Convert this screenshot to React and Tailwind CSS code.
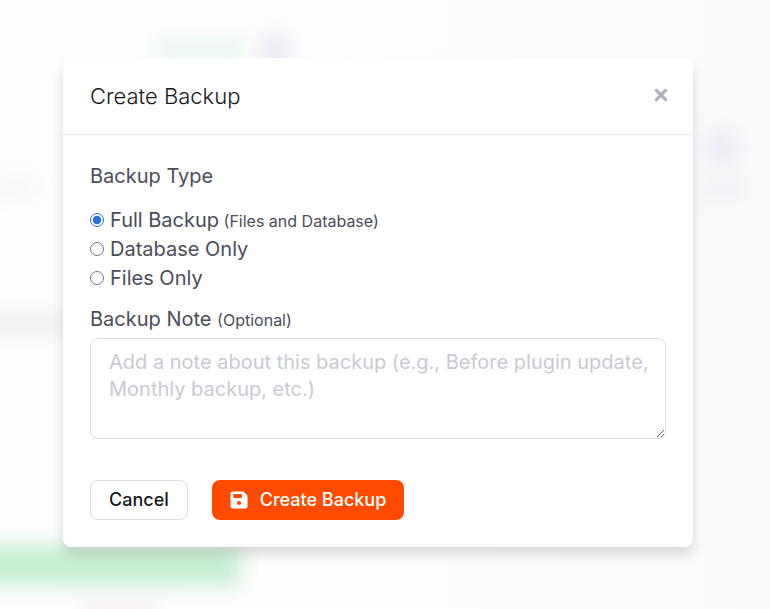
import React, { useState } from 'react';

const backupTypes = [
  { value: 'full', label: 'Full Backup', hint: '(Files and Database)' },
  { value: 'database', label: 'Database Only' },
  { value: 'files', label: 'Files Only' }
];

function SaveIcon() {
  return (
    <svg className="w-[18px] h-[18px]" viewBox="0 0 18 18" fill="currentColor" aria-hidden="true">
      <path
        fillRule="evenodd"
        d="M2.5 0.5H13.3L17.5 4.4V15.5A2 2 0 0 1 15.5 17.5H2.5A2 2 0 0 1 0.5 15.5V2.5A2 2 0 0 1 2.5 0.5ZM3.4 3.1V6.9H11.8V3.1ZM9 9.9A2.1 2.1 0 1 0 9 14.1A2.1 2.1 0 1 0 9 9.9Z"
      />
    </svg>
  );
}

function CloseIcon() {
  return (
    <svg className="w-4 h-4" viewBox="0 0 16 16" fill="none" stroke="currentColor" strokeWidth="3.2" strokeLinecap="round" aria-hidden="true">
      <path d="M3.4 3.4L12.6 12.6M12.6 3.4L3.4 12.6" />
    </svg>
  );
}

// Blurred page behind the dialog
function Backdrop() {
  return (
    <div className="absolute inset-0 overflow-hidden bg-linear-to-r from-[#fdfdfd] from-50% to-[#f9fafc]">
      <div className="flex flex-col -ml-10 blur-[10px]">
        <div className="flex items-center gap-4 pt-9 pl-[195px]">
          <div className="w-[92px] h-5 bg-[#ebf9f0]" />
          <div className="w-6 h-7 rounded-full bg-[#e4e0f0]" />
        </div>
        <div className="flex items-end justify-between pt-[70px] pr-7">
          <div className="w-[76px] h-4 bg-[#f5f5f9]" />
          <div className="flex flex-col items-center gap-5">
            <div className="w-7 h-7 rounded-full bg-[#e9e4f1]" />
            <div className="w-10 h-3 bg-[#efecf4]" />
          </div>
        </div>
        <div className="w-36 h-5 mt-[120px] bg-[#efeff0]" />
        <div className="w-[280px] h-10 mt-[211px] bg-[#c6eed3]" />
        <div className="w-[70px] h-3 mt-5 ml-[125px] bg-[#fbeaea]" />
      </div>
    </div>
  );
}

export default function App() {
  const [type, setType] = useState('full');
  const [note, setNote] = useState('');

  return (
    <div className="relative min-h-screen pt-[58px] pb-10 pl-[63px] pr-[77px] font-['Inter',sans-serif] text-xl text-[#4b4d59]">
      <Backdrop />
      <div
        role="dialog"
        aria-labelledby="dialog-title"
        className="relative w-full max-w-3xl rounded-lg bg-white shadow-[0_8px_12px_rgba(0,0,0,0.13)]"
      >
        <div className="flex items-center justify-between h-[77px] pl-[27px] pr-6 border-b border-[#ebebed]">
          <h2 id="dialog-title" className="text-[22px] font-light text-[#18181b]">Create Backup</h2>
          <button type="button" aria-label="Close" className="pb-0.5 text-[#b0afbc]">
            <CloseIcon />
          </button>
        </div>

        <form className="p-[27px]" onSubmit={(e) => e.preventDefault()}>
          <fieldset>
            <legend className="leading-7">Backup Type</legend>
            <div className="pt-4">
              {backupTypes.map((item) => (
                <label key={item.value} className="flex items-center gap-1.5 leading-[29px]">
                  <input
                    type="radio"
                    name="backupType"
                    value={item.value}
                    checked={type === item.value}
                    onChange={() => setType(item.value)}
                    className="mb-0.5 w-3.5 h-3.5 accent-[#2a6fdb]"
                  />
                  <span>
                    {item.label}
                    {item.hint && <small className="text-base"> {item.hint}</small>}
                  </span>
                </label>
              ))}
            </div>
          </fieldset>

          <div className="flex flex-col gap-[5px] pt-3">
            <label htmlFor="note" className="leading-7">
              Backup Note <small className="text-base">(Optional)</small>
            </label>
            <textarea
              id="note"
              value={note}
              onChange={(e) => setNote(e.target.value)}
              placeholder="Add a note about this backup (e.g., Before plugin update, Monthly backup, etc.)"
              className="w-full h-[101px] pl-[18px] pr-3 py-2.5 rounded-lg border border-[#dedee0] bg-white leading-[27px] placeholder:text-[#c8cbd5]"
            />
          </div>

          <div className="flex gap-6 pt-[41px] text-lg font-medium">
            <button type="button" className="h-10 px-[18px] rounded-lg border border-[#dedee0] bg-white text-[#18181b]">
              Cancel
            </button>
            <button type="submit" className="flex items-center gap-3 h-10 px-[18px] rounded-lg bg-[#ff4b00] text-white">
              <SaveIcon />
              Create Backup
            </button>
          </div>
        </form>
      </div>
    </div>
  );
}
